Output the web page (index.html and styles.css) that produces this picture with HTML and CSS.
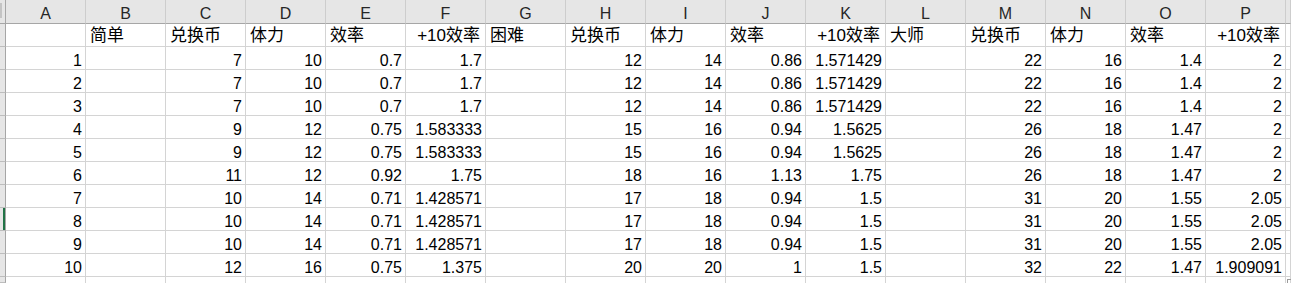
FILE: index.html
```html
<!DOCTYPE html>
<html lang="zh-CN">
<head>
<meta charset="utf-8">
<title>Sheet</title>
<link rel="stylesheet" href="styles.css">
</head>
<body>
<div class="sheet">
  <div class="corner"><span class="corner-mark"></span></div>
  <div class="ch">A</div><div class="ch">B</div><div class="ch">C</div><div class="ch">D</div><div class="ch">E</div><div class="ch">F</div><div class="ch">G</div><div class="ch">H</div><div class="ch">I</div><div class="ch">J</div><div class="ch">K</div><div class="ch">L</div><div class="ch">M</div><div class="ch">N</div><div class="ch">O</div><div class="ch">P</div><div class="ch"></div>

  <div class="rh"></div>
  <div class="c"></div><div class="c t">简单</div><div class="c t">兑换币</div><div class="c t">体力</div><div class="c t">效率</div><div class="c tr">+10效率</div><div class="c t">困难</div><div class="c t">兑换币</div><div class="c t">体力</div><div class="c t">效率</div><div class="c tr">+10效率</div><div class="c t">大师</div><div class="c t">兑换币</div><div class="c t">体力</div><div class="c t">效率</div><div class="c tr">+10效率</div><div class="c"></div>

  <div class="rh"></div>
  <div class="c n">1</div><div class="c"></div><div class="c n">7</div><div class="c n">10</div><div class="c n">0.7</div><div class="c n">1.7</div><div class="c"></div><div class="c n">12</div><div class="c n">14</div><div class="c n">0.86</div><div class="c n">1.571429</div><div class="c"></div><div class="c n">22</div><div class="c n">16</div><div class="c n">1.4</div><div class="c n">2</div><div class="c"></div>

  <div class="rh"></div>
  <div class="c n">2</div><div class="c"></div><div class="c n">7</div><div class="c n">10</div><div class="c n">0.7</div><div class="c n">1.7</div><div class="c"></div><div class="c n">12</div><div class="c n">14</div><div class="c n">0.86</div><div class="c n">1.571429</div><div class="c"></div><div class="c n">22</div><div class="c n">16</div><div class="c n">1.4</div><div class="c n">2</div><div class="c"></div>

  <div class="rh"></div>
  <div class="c n">3</div><div class="c"></div><div class="c n">7</div><div class="c n">10</div><div class="c n">0.7</div><div class="c n">1.7</div><div class="c"></div><div class="c n">12</div><div class="c n">14</div><div class="c n">0.86</div><div class="c n">1.571429</div><div class="c"></div><div class="c n">22</div><div class="c n">16</div><div class="c n">1.4</div><div class="c n">2</div><div class="c"></div>

  <div class="rh"></div>
  <div class="c n">4</div><div class="c"></div><div class="c n">9</div><div class="c n">12</div><div class="c n">0.75</div><div class="c n">1.583333</div><div class="c"></div><div class="c n">15</div><div class="c n">16</div><div class="c n">0.94</div><div class="c n">1.5625</div><div class="c"></div><div class="c n">26</div><div class="c n">18</div><div class="c n">1.47</div><div class="c n">2</div><div class="c"></div>

  <div class="rh"></div>
  <div class="c n">5</div><div class="c"></div><div class="c n">9</div><div class="c n">12</div><div class="c n">0.75</div><div class="c n">1.583333</div><div class="c"></div><div class="c n">15</div><div class="c n">16</div><div class="c n">0.94</div><div class="c n">1.5625</div><div class="c"></div><div class="c n">26</div><div class="c n">18</div><div class="c n">1.47</div><div class="c n">2</div><div class="c"></div>

  <div class="rh"></div>
  <div class="c n">6</div><div class="c"></div><div class="c n">11</div><div class="c n">12</div><div class="c n">0.92</div><div class="c n">1.75</div><div class="c"></div><div class="c n">18</div><div class="c n">16</div><div class="c n">1.13</div><div class="c n">1.75</div><div class="c"></div><div class="c n">26</div><div class="c n">18</div><div class="c n">1.47</div><div class="c n">2</div><div class="c"></div>

  <div class="rh"></div>
  <div class="c n">7</div><div class="c"></div><div class="c n">10</div><div class="c n">14</div><div class="c n">0.71</div><div class="c n">1.428571</div><div class="c"></div><div class="c n">17</div><div class="c n">18</div><div class="c n">0.94</div><div class="c n">1.5</div><div class="c"></div><div class="c n">31</div><div class="c n">20</div><div class="c n">1.55</div><div class="c n">2.05</div><div class="c"></div>

  <div class="rh sel"></div>
  <div class="c n">8</div><div class="c"></div><div class="c n">10</div><div class="c n">14</div><div class="c n">0.71</div><div class="c n">1.428571</div><div class="c"></div><div class="c n">17</div><div class="c n">18</div><div class="c n">0.94</div><div class="c n">1.5</div><div class="c"></div><div class="c n">31</div><div class="c n">20</div><div class="c n">1.55</div><div class="c n">2.05</div><div class="c"></div>

  <div class="rh"></div>
  <div class="c n">9</div><div class="c"></div><div class="c n">10</div><div class="c n">14</div><div class="c n">0.71</div><div class="c n">1.428571</div><div class="c"></div><div class="c n">17</div><div class="c n">18</div><div class="c n">0.94</div><div class="c n">1.5</div><div class="c"></div><div class="c n">31</div><div class="c n">20</div><div class="c n">1.55</div><div class="c n">2.05</div><div class="c"></div>

  <div class="rh"></div>
  <div class="c n">10</div><div class="c"></div><div class="c n">12</div><div class="c n">16</div><div class="c n">0.75</div><div class="c n">1.375</div><div class="c"></div><div class="c n">20</div><div class="c n">20</div><div class="c n">1</div><div class="c n">1.5</div><div class="c"></div><div class="c n">32</div><div class="c n">22</div><div class="c n">1.47</div><div class="c n">1.909091</div><div class="c"></div>

  <div class="rh"></div>
  <div class="c"></div><div class="c"></div><div class="c"></div><div class="c"></div><div class="c"></div><div class="c"></div><div class="c"></div><div class="c"></div><div class="c"></div><div class="c"></div><div class="c"></div><div class="c"></div><div class="c"></div><div class="c"></div><div class="c"></div><div class="c"></div><div class="c"></div>
</div>
<span class="fill-handle"></span>
</body>
</html>
```

FILE: styles.css
```css
html, body {
  margin: 0;
  padding: 0;
  background: #ffffff;
  overflow: hidden;
  width: 1291px;
  height: 283px;
}

body {
  position: relative;
  font-family: "Liberation Sans", "Noto Sans CJK SC", sans-serif;
  font-size: 16px;
  color: #000;
}

.sheet {
  display: grid;
  grid-template-columns: 6px repeat(16, 80px) 5px;
  grid-template-rows: 24px repeat(11, 23px) 6px;
  width: 1291px;
  height: 283px;
}

.sheet > div {
  box-sizing: border-box;
  overflow: hidden;
  white-space: nowrap;
}

.corner {
  background: #e6e6e6;
  border-right: 1px solid #a6a6a6;
  border-bottom: 1px solid #a6a6a6;
  position: relative;
}

.corner-mark {
  position: absolute;
  left: 0;
  top: 3px;
  width: 2px;
  height: 15px;
  background: #c4c4c4;
}

.ch {
  background: #e6e6e6;
  border-right: 1px solid #cdcdcd;
  border-bottom: 1px solid #a6a6a6;
  text-align: center;
  color: #262626;
  line-height: 16px;
  padding-top: 6px;
}

.rh {
  background: #e6e6e6;
  border-right: 1px solid #a6a6a6;
  border-bottom: 1px solid #bdbdbd;
}

.rh.sel {
  box-shadow: inset -2px 0 0 #217346;
}

.c {
  border-right: 1px solid #d4d4d4;
  border-bottom: 1px solid #d4d4d4;
  line-height: 16px;
  padding-top: 6px;
}

.n {
  text-align: right;
  padding-right: 3px;
}

.t {
  font-size: 17px;
  padding-left: 4px;
  padding-top: 4px;
}

.tr {
  font-size: 17px;
  text-align: right;
  padding-right: 5px;
  padding-top: 4px;
}

.fill-handle {
  position: absolute;
  left: 1287px;
  top: 279px;
  width: 4px;
  height: 4px;
  border-left: 1px solid #9a9a9a;
  border-top: 1px solid #9a9a9a;
}
```
